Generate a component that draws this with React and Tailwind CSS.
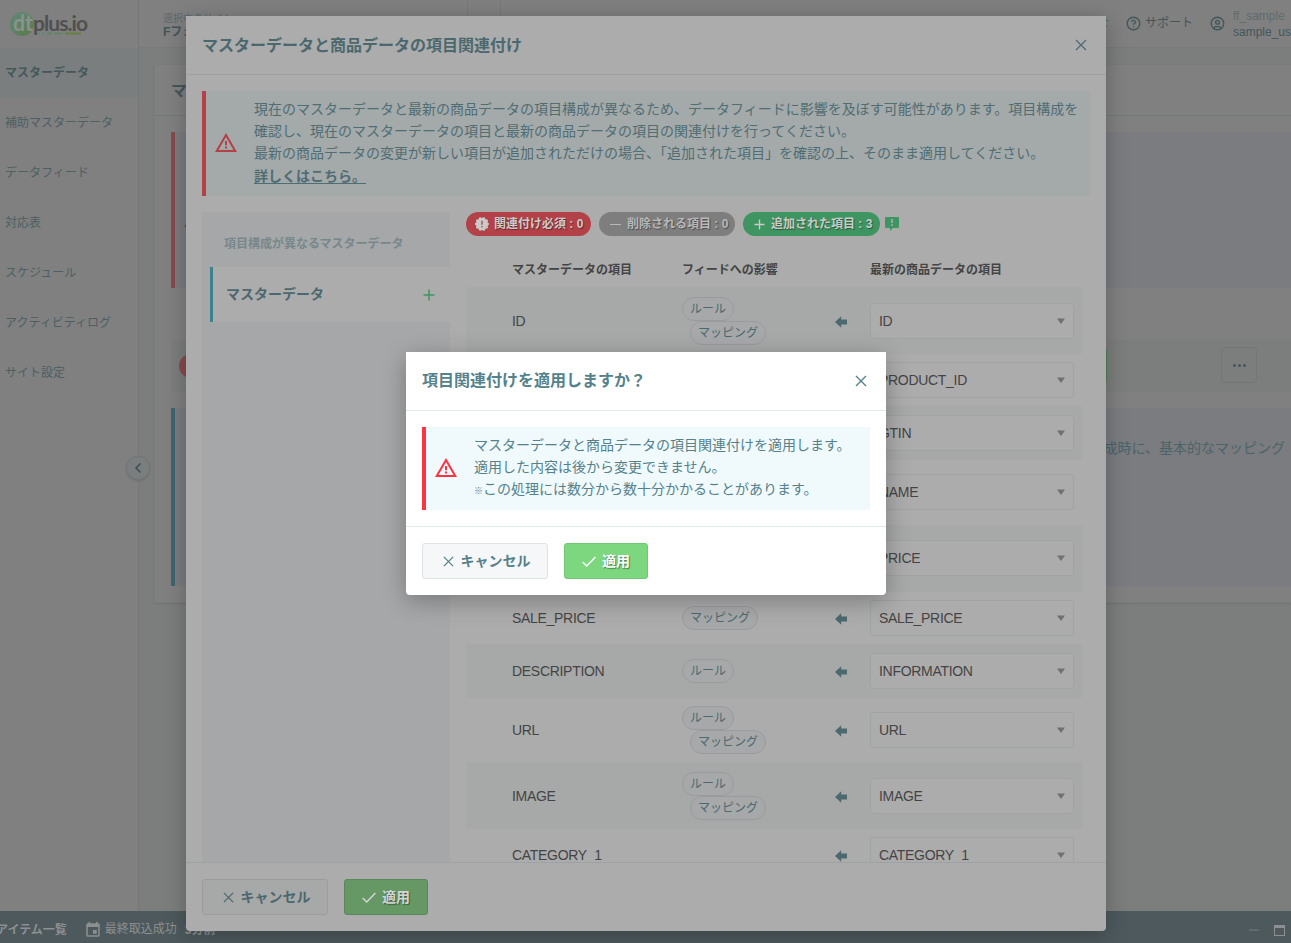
import { ChevronLeft, CircleHelp, CircleUser } from "lucide-react";
import { MdEvent, MdNewReleases } from "react-icons/md";

const MENU = [
  "マスターデータ",
  "補助マスターデータ",
  "データフィード",
  "対応表",
  "スケジュール",
  "アクティビティログ",
  "サイト設定",
];

const ROWS = [
  { name: "ID", target: "ID", tags: ["ルール", "マッピング"], h: "h-[67px]" },
  { name: "PRODUCT_ID", target: "PRODUCT_ID", tags: [], h: "h-[52px]" },
  { name: "GTIN", target: "GTIN", tags: [], h: "h-[54px]" },
  { name: "NAME", target: "NAME", tags: [], h: "h-[65px] pb-px" },
  { name: "PRICE", target: "PRICE", tags: [], h: "h-[67px] pb-px" },
  { name: "SALE_PRICE", target: "SALE_PRICE", tags: ["マッピング"], h: "h-[52px]" },
  { name: "DESCRIPTION", target: "INFORMATION", tags: ["ルール"], h: "h-[54px]" },
  { name: "URL", target: "URL", tags: ["ルール", "マッピング"], h: "h-[64px]" },
  { name: "IMAGE", target: "IMAGE", tags: ["ルール", "マッピング"], h: "h-[67px]" },
  { name: "CATEGORY_1", target: "CATEGORY_1", tags: [], h: "h-[52px]" },
];

function Cross({ className }) {
  return (
    <svg viewBox="0 0 12 12" className={className} fill="none" stroke="currentColor" strokeWidth="1.4">
      <path d="M1 1l10 10M11 1L1 11" />
    </svg>
  );
}

function Check() {
  return (
    <svg viewBox="0 0 14 11" className="w-[14px] h-[11px]" fill="none" stroke="currentColor" strokeWidth="1.5">
      <path d="M.7 6l4 4L13.4.9" />
    </svg>
  );
}

function Plus({ className }) {
  return (
    <svg viewBox="0 0 12 12" className={className} fill="none" stroke="currentColor" strokeWidth="1.5">
      <path d="M6 .5v11M.5 6h11" />
    </svg>
  );
}

function Warning({ className }) {
  return (
    <svg viewBox="0 0 22 19" className={className}>
      <path
        fill="currentColor"
        fillRule="evenodd"
        d="M11 0L0 19h22L11 0zm0 4l7.5 13h-15L11 4zM10 8h2v4.2h-2zM10 13.6h2v2h-2z"
      />
    </svg>
  );
}

function Notice() {
  return (
    <svg viewBox="0 0 14 14" className="w-[14px] h-[14px] -ml-[3px]">
      <path
        fill="#3f9562"
        fillRule="evenodd"
        d="M1 0h12a1 1 0 011 1v9a1 1 0 01-1 1H8l-3 3v-3H1a1 1 0 01-1-1V1a1 1 0 011-1zm5.200 2v4h1.600V2zm0 5.300v1.600h1.600V7.300z"
      />
    </svg>
  );
}

function Logo() {
  return (
    <svg viewBox="0 0 84 28" className="w-[84px] h-[28px]">
      <defs>
        <linearGradient id="ball" x1="0" y1="0" x2="0.6" y2="1">
          <stop offset="0" stopColor="#5f8879" />
          <stop offset="1" stopColor="#5b7d52" />
        </linearGradient>
      </defs>
      <circle cx="13" cy="14" r="12" fill="url(#ball)" />
      <text
        x="4"
        y="21"
        fontFamily="Lato, sans-serif"
        fontWeight="700"
        fontSize="22"
        fill="#8b918d"
        textLength="20"
        lengthAdjust="spacingAndGlyphs"
      >
        dt
      </text>
      <text x="24" y="21" fontFamily="Lato, sans-serif" fontWeight="700" fontSize="21" fill="#505050" textLength="55">
        plus.io
      </text>
      <g strokeWidth="2">
        <path d="M29 23.5h2M33 23.5h3" stroke="#5f8879" />
        <path d="M38 23.5h5M45.5 23.5h8" stroke="#5e8565" />
        <path d="M56 23.5h16" stroke="#65803f" />
      </g>
    </svg>
  );
}

function Tag({ children, indent }) {
  return (
    <span
      className={`h-6 px-[7px] rounded-full border border-[#999c9f] bg-[#a6a8aa] text-xs leading-[23px] text-[#4b696f] ${
        indent ? "ml-2" : ""
      }`}
    >
      {children}
    </span>
  );
}

function Row({ row, striped }) {
  return (
    <div className={`flex items-center shrink-0 pl-[46px] pr-2 ${row.h} ${striped ? "bg-[#a6a9a8]" : ""}`}>
      <div className="w-[170px] text-sm leading-5 tracking-[-0.3px] text-[#444]">{row.name}</div>
      <div className="w-[152px] flex flex-col items-start">
        {row.tags.map((t, i) => (
          <Tag key={t} indent={i > 0}>
            {t}
          </Tag>
        ))}
      </div>
      <div className="w-[36px] pt-[2px]">
        <svg viewBox="0 0 12 12" className="w-3 h-3 ml-[1px]" fill="#4b696f">
          <path d="M0 6L6.2.3v3.2H12v5H6.2v3.2z" />
        </svg>
      </div>
      <div className="flex-1 h-9 pl-2 pr-2 flex items-center justify-between rounded-[3px] border border-[#9fa3a3] bg-[#acacac] text-sm leading-5 tracking-[-0.3px] text-[#444]">
        {row.target}
        <svg viewBox="0 0 8 6" className="w-2 h-[6px]" fill="#707070">
          <path d="M0 .5h8L4 6z" />
        </svg>
      </div>
    </div>
  );
}

function Topbar() {
  return (
    <header className="h-12 flex border-b border-[#777a7a]">
      <div className="w-[329px] pl-6 pt-[12px] border-r border-[#777a7a]">
        <div className="text-[10px] leading-[13px] text-[#5f6869]">選択中のサイト</div>
        <div className="text-xs leading-[14px] font-bold text-[#44555a]">Fフォースサンプル</div>
      </div>
      <div className="w-[33px] border-r border-[#777a7a]"></div>
      <div className="flex-1 flex justify-end text-[#44565a] text-xs">
        <div className="pt-[15px] leading-4 mr-[17px]">お知らせ</div>
        <CircleHelp className="w-[15px] h-[15px] mt-4 mr-[4px]" strokeWidth={2.2} />
        <div className="pt-[15px] leading-4 mr-[17px]">サポート</div>
        <CircleUser className="w-[15px] h-[15px] mt-4" strokeWidth={2.2} />
        <div className="w-[58px] ml-[8px] pt-2 leading-4 overflow-hidden">
          <div className="text-[#5f6b6d]">ff_sample</div>
          <div>sample_user</div>
        </div>
      </div>
    </header>
  );
}

function Background() {
  return (
    <div className="h-full flex flex-col">
      <div className="flex-1 flex">
        <aside className="relative w-[139px] shrink-0 bg-[#808080] border-r border-[#757877]">
          <div className="h-[48px] pl-[9px] pt-[10px]">
            <Logo />
          </div>
          <nav className="flex flex-col text-xs text-[#4c5f62]">
            {MENU.map((m, i) => (
              <a
                key={m}
                className={`h-[50px] pl-[5px] leading-[51px] ${i === 0 ? "bg-[#7b7e7e] font-bold text-[#44575b]" : ""}`}
              >
                {m}
              </a>
            ))}
          </nav>
          <button className="absolute -right-[12px] top-[456px] z-10 w-6 h-6 rounded-full flex items-center justify-center bg-[#7b7e7e] border border-[#727675] shadow-sm text-[#3e5054]">
            <ChevronLeft className="w-4 h-4" strokeWidth={2.5} />
          </button>
        </aside>
        <div className="flex-1 flex flex-col bg-[#808080]">
          <Topbar />
          <main className="flex-1 pl-[15px] pt-4 bg-[#7b7e7d]">
            <section className="h-[539px] bg-[#808080] border border-r-0 border-[#797c7b] shadow-[0_1px_2px_rgba(0,0,0,0.08)]">
              <h2 className="h-[51px] pl-4 leading-[51px] border-b border-[#757878] text-base font-bold text-[#44575b]">
                マスターデータ
              </h2>
              <div className="pl-4 pt-4">
                <div className="h-[156px] border-l-4 border-[#884a4d] bg-[#7a7c7f] pt-[76px] pl-[9px]">
                  <Warning className="w-[22px] h-[19px] text-[#8d4145]" />
                </div>
                <div className="mt-[51px] h-[53px] pl-2 pr-[34px] bg-[#7b7e7d] flex items-center justify-between">
                  <span className="w-6 h-6 rounded-full bg-[#884a4d]"></span>
                  <span className="ml-auto mr-[114px] w-[100px] h-9 rounded bg-[#528057]"></span>
                  <button className="w-9 h-9 -mt-px rounded border border-[#727776] flex items-center justify-center gap-[2px]">
                    <i className="w-[3px] h-[3px] rounded-full bg-[#44575b]"></i>
                    <i className="w-[3px] h-[3px] rounded-full bg-[#44575b]"></i>
                    <i className="w-[3px] h-[3px] rounded-full bg-[#44575b]"></i>
                  </button>
                </div>
                <div className="mt-4 h-[178px] border-l-4 border-[#40646d] bg-[#7a7c7f] pt-[29px] pr-[6px] text-right text-sm leading-[22px] text-[#4c6368]">
                  データフィードの作成時に、基本的なマッピング
                </div>
              </div>
            </section>
          </main>
        </div>
      </div>
      <footer className="h-8 shrink-0 flex items-center bg-[#4d595d] text-xs text-[#8c9091]">
        <b className="-ml-[4px] pt-[6px]">アイテム一覧</b>
        <MdEvent className="w-[18px] h-[18px] ml-[17px] mt-[5px]" />
        <span className="ml-[3px] pt-[4px]">最終取込成功</span>
        <b className="ml-2 pt-[5px]">3分前</b>
        <span className="ml-auto w-[10px] h-[2px] mt-[6px] bg-[#606b6e]"></span>
        <span className="ml-[15px] mr-[6px] mt-[6px] w-[11px] h-[11px] border border-t-[3px] border-[#8c9091]"></span>
      </footer>
    </div>
  );
}

function MappingModal() {
  return (
    <div className="w-[920px] h-[915px] flex flex-col rounded-b bg-[#acacac] text-[#4f6d73] shadow-[0_4px_22px_rgba(0,0,0,0.25)]">
      <div className="h-[59px] shrink-0 px-4 flex justify-between border-b border-[#9da1a1]">
        <h1 className="text-base leading-[59px] font-bold text-[#4b686e]">マスターデータと商品データの項目関連付け</h1>
        <Cross className="w-3 h-3 mt-[23px] mr-[3px]" />
      </div>
      <div className="flex-1 min-h-0 overflow-hidden px-4 pt-4 flex flex-col">
        <div className="h-[105px] shrink-0 flex border-l-4 border-[#b24247] bg-[#a4a9aa]">
          <Warning className="w-[22px] h-[19px] ml-[9px] mt-[42px] text-[#b24247]" />
          <div className="ml-[17px] pt-[7px] text-sm leading-[22px] whitespace-nowrap">
            <p>
              現在のマスターデータと最新の商品データの項目構成が異なるため、データフィードに影響を及ぼす可能性があります。項目構成を
              <br />
              確認し、現在のマスターデータの項目と最新の商品データの項目の関連付けを行ってください。
              <br />
              最新の商品データの変更が新しい項目が追加されただけの場合、「追加された項目」を確認の上、そのまま適用してください。
            </p>
            <a className="block pt-px font-bold underline underline-offset-2">詳しくはこちら。</a>
          </div>
        </div>
        <div className="flex-1 min-h-0 mt-4 flex gap-4">
          <div className="w-[248px] bg-[#a5a7a9]">
            <div className="h-[55px] pl-[22px] pt-[22px] text-xs leading-5 font-bold text-[#788789]">
              項目構成が異なるマスターデータ
            </div>
            <div className="ml-2 h-[55px] pl-[13px] pr-[15px] flex items-center justify-between border-l-[3px] border-[#3d8090] bg-[#acacac]">
              <span className="text-sm leading-5 font-bold pb-[2px] text-[#4b686e]">マスターデータ</span>
              <Plus className="w-3 h-3 text-[#3f9562]" />
            </div>
          </div>
          <div className="flex-1 min-h-0 overflow-hidden pr-2">
            <div className="flex items-center gap-2 text-xs leading-6 font-bold text-[#cacaca] [text-shadow:1px_1px_1px_rgba(0,0,0,0.4)]">
              <span className="w-[125px] h-6 pl-2 flex items-center whitespace-pre rounded-full bg-[#b24247]">
                <MdNewReleases className="w-4 h-4 mr-1" />
                関連付け必須 : 0
              </span>
              <span className="w-[136px] h-6 pl-[11px] flex items-center whitespace-pre rounded-full bg-[#7e7e7e] text-[#b8b8b8]">
                <i className="w-[11px] h-px mr-[6px] bg-[#b8b8b8]"></i>
                削除される項目 : 0
              </span>
              <span className="w-[137px] h-6 pl-[11px] flex items-center whitespace-pre rounded-full bg-[#3f9562]">
                <Plus className="w-[11px] h-[11px] mr-[6px]" />
                追加された項目 : 3
              </span>
              <Notice />
            </div>
            <div className="h-[51px] pl-[46px] pt-[24px] flex text-xs leading-5 font-bold text-[#444]">
              <div className="w-[170px]">マスターデータの項目</div>
              <div className="w-[188px]">フィードへの影響</div>
              <div>最新の商品データの項目</div>
            </div>
            {ROWS.map((row, i) => (
              <Row key={row.name} row={row} striped={i % 2 === 0} />
            ))}
          </div>
        </div>
      </div>
      <div className="h-[69px] shrink-0 px-4 pt-4 flex gap-4 border-t border-[#9da3a4] text-sm font-bold">
        <button className="w-[126px] h-9 pl-[3px] flex items-center justify-center gap-[7px] rounded-[3px] border border-[#999d9d] bg-[#a6a9a8] text-[#4b686e]">
          <Cross className="w-[11px] h-[11px]" />
          キャンセル
        </button>
        <button className="w-[84px] h-9 flex items-center justify-center gap-[6px] rounded-[3px] border border-[#5a875c] bg-[#659865] text-[#d4d4d4] [text-shadow:1px_1px_1px_rgba(0,0,0,0.4)]">
          <Check />
          適用
        </button>
      </div>
    </div>
  );
}

function ConfirmDialog() {
  return (
    <div className="w-[480px] h-[243px] rounded-b bg-white text-[#55828a] shadow-[0_6px_24px_rgba(0,0,0,0.28)]">
      <div className="h-[59px] px-4 flex justify-between border-b border-[#e1eaeb]">
        <h2 className="text-base leading-[58px] font-bold">項目関連付けを適用しますか？</h2>
        <Cross className="w-3 h-3 mt-[23px] mr-[3px]" />
      </div>
      <div className="h-[115px] p-4">
        <div className="h-[83px] flex border-l-4 border-[#fc3441] bg-[#f0f9fc]">
          <Warning className="w-[22px] h-[19px] ml-[9px] mt-[31px] text-[#fc3441]" />
          <p className="ml-[17px] pt-[7px] text-sm leading-[22px] whitespace-nowrap">
            マスターデータと商品データの項目関連付けを適用します。
            <br />
            適用した内容は後から変更できません。
            <br />
            <span className="text-[9px] font-black">※</span>この処理には数分から数十分かかることがあります。
          </p>
        </div>
      </div>
      <div className="h-[69px] px-4 pt-4 flex gap-4 border-t border-[#e1eaeb] text-sm font-bold">
        <button className="w-[126px] h-9 pl-[3px] flex items-center justify-center gap-[7px] rounded-[3px] border border-[#dde2e5] bg-[#f5f7f9]">
          <Cross className="w-[11px] h-[11px]" />
          キャンセル
        </button>
        <button className="w-[84px] h-9 flex items-center justify-center gap-[6px] rounded-[3px] border border-[#6fc873] bg-[#7cd77f] text-white [text-shadow:1px_1px_1px_rgba(0,0,0,0.4)]">
          <Check />
          適用
        </button>
      </div>
    </div>
  );
}

export default function App() {
  return (
    <div
      lang="ja"
      className="relative w-[1291px] h-[943px] overflow-hidden font-['Liberation_Sans','Noto_Sans_CJK_JP',sans-serif]"
    >
      <Background />
      <div className="absolute inset-0 z-20 pt-4 pl-[186px]">
        <MappingModal />
      </div>
      <div className="absolute inset-0 z-30 pt-[352px] pl-[406px]">
        <ConfirmDialog />
      </div>
    </div>
  );
}
